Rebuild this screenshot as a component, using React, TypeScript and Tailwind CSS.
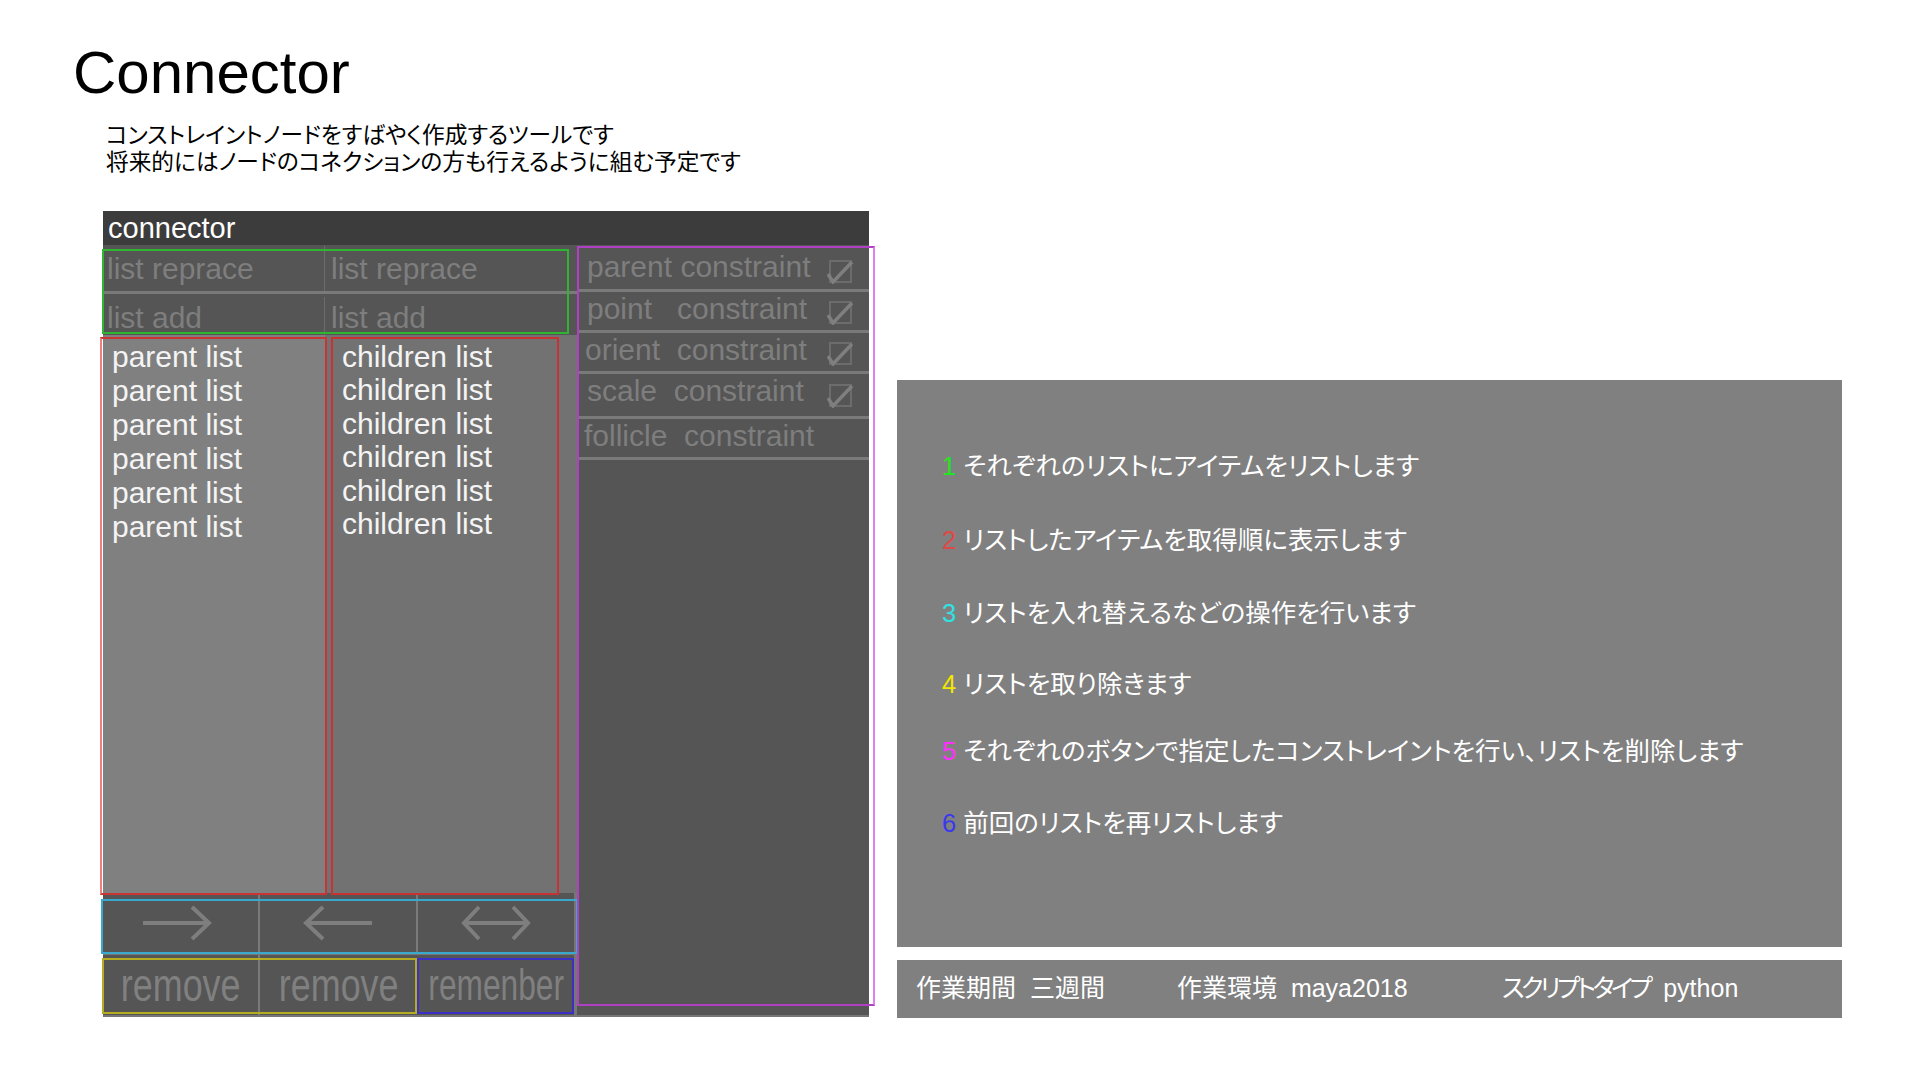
const latin = "font-['Liberation_Sans',Arial,sans-serif]"
const jp = "font-['Liberation_Sans','Noto_Sans_CJK_JP',sans-serif] [font-feature-settings:'palt']"

function ArrowRight() {
  return (
    <svg width="72" height="38" viewBox="0 0 72 38" fill="none">
      <path d="M2 19 H68 M51 3 L68 19 L51 35" stroke="#7e7e7e" strokeWidth="4" />
    </svg>
  )
}

function ArrowLeft() {
  return (
    <svg width="72" height="38" viewBox="0 0 72 38" fill="none">
      <path d="M4 19 H70 M21 3 L4 19 L21 35" stroke="#7e7e7e" strokeWidth="4" />
    </svg>
  )
}

function ArrowBoth() {
  return (
    <svg width="72" height="38" viewBox="0 0 72 38" fill="none">
      <path d="M4 19 H68 M19 3 L4 19 L19 35 M53 3 L68 19 L53 35" stroke="#7e7e7e" strokeWidth="4" />
    </svg>
  )
}

function Check() {
  return (
    <svg width="28" height="24" viewBox="0 0 28 24" fill="none">
      <rect x="3" y="1" width="21" height="21" stroke="#6c6c6c" strokeWidth="2" />
      <path d="M1 14 L6 22 L25 2" stroke="#7f7f7f" strokeWidth="3.5" />
    </svg>
  )
}

const steps = [
  { n: '1', color: 'text-[#22e622]', gap: 'mt-0', text: 'それぞれのリストにアイテムをリストします' },
  { n: '2', color: 'text-[#e04848]', gap: 'mt-[44px]', text: 'リストしたアイテムを取得順に表示します' },
  { n: '3', color: 'text-[#33e0e0]', gap: 'mt-[43px]', text: 'リストを入れ替えるなどの操作を行います' },
  { n: '4', color: 'text-[#f2e600]', gap: 'mt-[41px]', text: 'リストを取り除きます' },
  { n: '5', color: 'text-[#ff30ff]', gap: 'mt-[37px]', text: 'それぞれのボタンで指定したコンストレイントを行い、リストを削除します' },
  { n: '6', color: 'text-[#3838f0]', gap: 'mt-[42px]', text: '前回のリストを再リストします' },
]

export default function App() {
  const parents = Array.from({ length: 6 }, () => 'parent list')
  const children = Array.from({ length: 6 }, () => 'children list')

  return (
    <div className="w-[1920px] h-[1080px] bg-white overflow-hidden">
      <h1 className={`${latin} pt-[43px] pl-[73px] text-[60px] leading-none text-black`}>Connector</h1>
      <div className={`${jp} mt-[19px] pl-[106px] text-[22.7px] leading-[27px] text-black`}>
        <p>コンストレイントノードをすばやく作成するツールです</p>
        <p>将来的にはノードのコネクションの方も行えるように組む予定です</p>
      </div>

      <div className="flex items-start mt-[35px] pl-[103px]">
        {/* tool window */}
        <div className={`${latin} relative w-[766px]`}>
          <div className="h-[34px] bg-[#3c3c3c] pl-[5px] text-[29px] leading-[34px] text-white">connector</div>

          <div className="flex bg-[#767676] pb-[2px]">
            {/* left side */}
            <div className="w-[474px] flex flex-col">
              <div className="flex h-[49px] bg-[#555555] border-b-[3px] border-[#7a7a7a] text-[30px] leading-[46px] text-[#7e7e7e] pt-[1px]">
                <div className="w-[222px] pl-[4px] border-r border-[#6c6c6c]">list reprace</div>
                <div className="flex-1 pl-[6px]">list reprace</div>
              </div>
              <div className="flex h-[41px] bg-[#555555] text-[30px] leading-[41px] text-[#7e7e7e] pt-[3px]">
                <div className="w-[222px] pl-[4px] border-r border-[#6c6c6c]">list add</div>
                <div className="flex-1 pl-[6px]">list add</div>
              </div>
              <div className="flex h-[558px] text-[30px] text-[#f4f4f4]">
                <div className="w-[222px] bg-[#808080] pl-[9px] pt-[5px] leading-[34px]">
                  {parents.map((t, i) => (
                    <div key={i}>{t}</div>
                  ))}
                </div>
                <div className="flex-1 bg-[#727272] pl-[17px] pt-[5px] leading-[33.4px]">
                  {children.map((t, i) => (
                    <div key={i}>{t}</div>
                  ))}
                </div>
              </div>
              <div className="flex h-[60px] w-[471px] bg-[#555555]">
                <div className="w-[157px] shrink-0 flex items-center justify-center pr-[8px] border-r-2 border-[#7a7a7a]">
                  <ArrowRight />
                </div>
                <div className="w-[158px] shrink-0 flex items-center justify-center border-r-2 border-[#7a7a7a]">
                  <ArrowLeft />
                </div>
                <div className="flex-1 min-w-0 flex items-center justify-center">
                  <ArrowBoth />
                </div>
              </div>
              <div className="flex h-[60px] w-[471px] mt-[2px] bg-[#555555] leading-[60px] text-[#808080]">
                <div className="w-[157px] shrink-0 flex justify-center border-r-2 border-[#7a7a7a] text-[46px]">
                  <span className="inline-block scale-x-[0.78]">remove</span>
                </div>
                <div className="w-[158px] shrink-0 flex justify-center text-[46px]">
                  <span className="inline-block scale-x-[0.78]">remove</span>
                </div>
                <div className="flex-1 min-w-0 flex justify-center text-[44px]">
                  <span className="inline-block shrink-0 scale-x-[0.72]">remenber</span>
                </div>
              </div>
            </div>

            {/* right side */}
            <div className="w-[292px] bg-[#555555] flex flex-col text-[30px] leading-[30px] text-[#7e7e7e]">
              <div className="h-[47px] flex items-start justify-between pl-[10px] pr-[14px] pt-[7px] border-b-[3px] border-[#7a7a7a]">
                <span className="whitespace-pre">parent constraint</span>
                <span className="mt-[8px]"><Check /></span>
              </div>
              <div className="h-[41px] flex items-start justify-between pl-[10px] pr-[14px] pt-[2px] border-b-[3px] border-[#7a7a7a]">
                <span className="whitespace-pre">point   constraint</span>
                <span className="mt-[7px]"><Check /></span>
              </div>
              <div className="h-[41px] flex items-start justify-between pl-[8px] pr-[14px] pt-[2px] border-b-[3px] border-[#7a7a7a]">
                <span className="whitespace-pre">orient  constraint</span>
                <span className="mt-[7px]"><Check /></span>
              </div>
              <div className="h-[45px] flex items-start justify-between pl-[10px] pr-[14px] pt-[2px] border-b-[3px] border-[#7a7a7a]">
                <span className="whitespace-pre">scale  constraint</span>
                <span className="mt-[8px]"><Check /></span>
              </div>
              <div className="h-[41px] flex items-start pl-[7px] pt-[2px] border-b-[3px] border-[#7a7a7a]">
                <span className="whitespace-pre">follicle  constraint</span>
              </div>
            </div>
          </div>

          {/* annotation frames */}
          <div className="absolute left-[-1px] top-[38px] w-[467px] h-[85px] border-2 border-[#2fb52f]" />
          <div className="absolute left-[-3px] top-[126px] w-[227px] h-[558px] border-2 border-[#cc3333] border-l-[#f08080]" />
          <div className="absolute left-[228px] top-[126px] w-[228px] h-[558px] border-2 border-[#c83232]" />
          <div className="absolute left-[-2px] top-[688px] w-[477px] h-[55px] border-2 border-[#38a8cc]" />
          <div className="absolute left-[-1px] top-[747px] w-[315px] h-[56px] border-2 border-[#b5ad1f]" />
          <div className="absolute left-[314px] top-[747px] w-[157px] h-[56px] border-2 border-[#3b2fc6]" />
          <div className="absolute left-[474px] top-[35px] w-[298px] h-[760px] border-2 border-[#b03fc4] border-r-[#e07ff0]" />
        </div>

        {/* description */}
        <div className={`${jp} ml-[28px] mt-[169px] w-[945px]`}>
          <div className="h-[567px] bg-[#808080] pt-[71px] pl-[45px] flex flex-col text-[25.5px] leading-[30px] text-white">
            {steps.map((s) => (
              <div key={s.n} className={`${s.gap} whitespace-pre`}>
                <span className={s.color}>{s.n}</span>
                <span> {s.text}</span>
              </div>
            ))}
          </div>
          <div className="mt-[13px] h-[58px] bg-[#808080] flex items-center pl-[19px] text-[25px] text-white whitespace-pre">
            <span className="w-[261px]">作業期間  三週間</span>
            <span className="w-[325px]">作業環境  maya2018</span>
            <span>
              <span className="tracking-[-3.4px]">スクリプトタイプ</span>  python
            </span>
          </div>
        </div>
      </div>
    </div>
  )
}
